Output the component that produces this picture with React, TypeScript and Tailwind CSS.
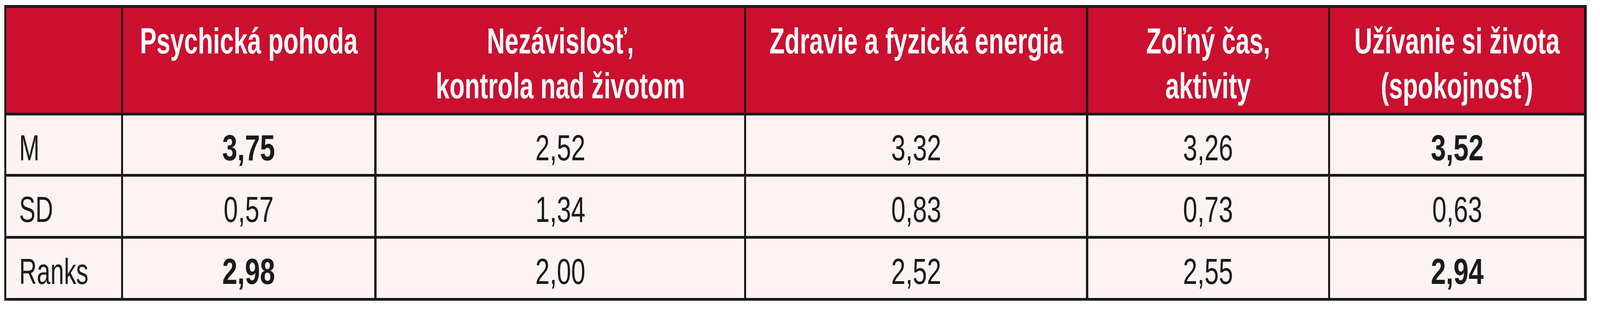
import React from 'react';

type Row = {
  label: string;
  values: string[];
  bold: boolean[];
};

const headers: string[][] = [
  ['Psychická pohoda'],
  ['Nezávislosť,', 'kontrola nad životom'],
  ['Zdravie a fyzická energia'],
  ['Zoľný čas,', 'aktivity'],
  ['Užívanie si života', '(spokojnosť)'],
];

const rows: Row[] = [
  { label: 'M', values: ['3,75', '2,52', '3,32', '3,26', '3,52'], bold: [true, false, false, false, true] },
  { label: 'SD', values: ['0,57', '1,34', '0,83', '0,73', '0,63'], bold: [false, false, false, false, false] },
  { label: 'Ranks', values: ['2,98', '2,00', '2,52', '2,55', '2,94'], bold: [true, false, false, false, true] },
];

const font = { fontFamily: '"Liberation Sans", Arial, sans-serif' };

const App: React.FC = () => {
  return (
    <div className="min-h-[800px] bg-white pl-[10.5px] pt-[13px]" style={font}>
      <div className="grid w-[4051px] grid-cols-[293.5px_643px_940.5px_870px_613.8px_649.5px] grid-rows-[269px_150px_152px_152px] gap-x-[5.7px] gap-y-[7px] bg-[#1b1817] px-[5.7px] py-[7px]">
        {/* Header row */}
        <div className="bg-[#cb0f2f]" />
        {headers.map((lines, i) => (
          <div
            key={i}
            className="flex flex-col items-center bg-[#cb0f2f] pt-[28px] text-[92px] leading-[115px] font-bold text-white whitespace-nowrap"
          >
            {lines.map((line, j) => (
              <span key={j} className="inline-block shrink-0 scale-x-[0.69]">
                {line}
              </span>
            ))}
          </div>
        ))}

        {/* Body rows */}
        {rows.map((row) => (
          <React.Fragment key={row.label}>
            <div className="flex items-center bg-[#fdf3f3] pl-[32.4px] pt-[16px] text-[92px] leading-[115px] text-[#1a1a1a]">
              <span className="inline-block origin-left scale-x-[0.68]">{row.label}</span>
            </div>
            {row.values.map((v, i) => (
              <div
                key={i}
                className="flex items-center justify-center bg-[#fdf3f3] pt-[16px] text-[92px] leading-[115px] text-[#1a1a1a]"
              >
                {row.bold[i] ? (
                  <span className="inline-block scale-x-[0.754] font-bold">{v}</span>
                ) : (
                  <span className="inline-block scale-x-[0.714] font-normal">{v}</span>
                )}
              </div>
            ))}
          </React.Fragment>
        ))}
      </div>
    </div>
  );
};

export default App;
